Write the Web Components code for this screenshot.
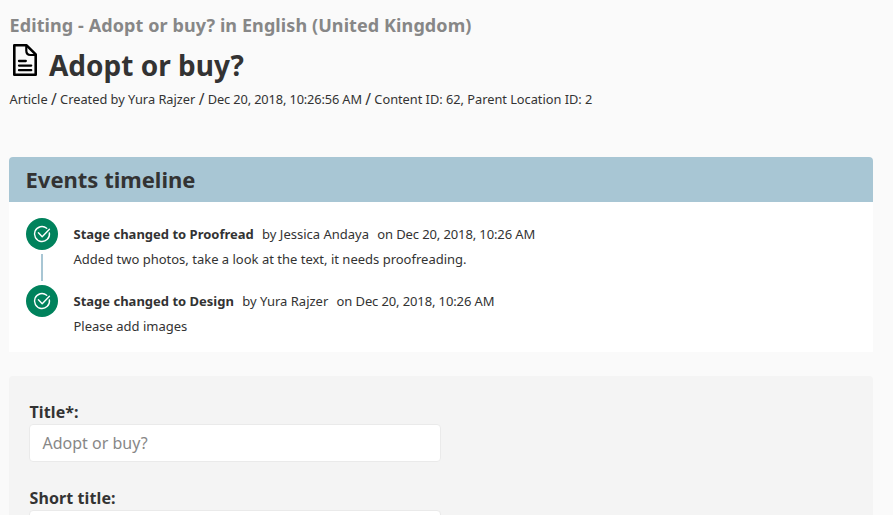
<!DOCTYPE html>
<html lang="en">
<head>
<meta charset="utf-8">
<title>Editing - Adopt or buy?</title>
<style>
html,body{margin:0;height:515px;overflow:hidden}
body{background:#fafafa;color:#333;font-family:"Noto Sans","Open Sans",sans-serif;font-size:16px}
</style>
</head>
<body>
<edit-page></edit-page>
<script>
const define = (name, html) => {
  const template = document.createElement('template');
  template.innerHTML = html;
  customElements.define(name, class extends HTMLElement {
    constructor() {
      super();
      this.attachShadow({ mode: 'open' }).append(template.content.cloneNode(true));
    }
  });
};

define('doc-icon', `
<style>:host{display:block;width:24px;height:32px}svg{display:block}</style>
<svg width="24" height="32" viewBox="0 0 24 32" fill="none" stroke="#000" stroke-width="2.6">
  <path d="M1.3 1.3H13.6L22.7 10.4V30.7H1.3Z" stroke-linejoin="round"/>
  <path d="M13.3 1.5V6.8Q13.3 11 17.5 11H22.7" stroke-width="2.2"/>
  <path d="M6 17H12.8M6 21.6H18.2M6 26.2H18.2" stroke-width="2.3" stroke-linecap="round"/>
</svg>`);

define('check-badge', `
<style>:host{display:block;width:32px;height:32px;border-radius:50%;background:#00825c}svg{display:block}</style>
<svg width="32" height="32" viewBox="0 0 32 32" fill="none" stroke="#fff" stroke-width="1.4" stroke-linecap="round" stroke-linejoin="round">
  <path d="M20.7 10.2A7.5 7.5 0 1 0 23.4 15"/>
  <path d="M12.4 14.8L16.2 18.8L23.4 11.2"/>
</svg>`);

define('content-header', `
<style>
:host{display:block;padding:12px 0 0 9.6px}
.context{font-weight:700;font-size:18px;line-height:27px;letter-spacing:.09px;color:#878787}
.title{display:flex;padding:5px 0 0 3.4px;gap:12px;height:47px;box-sizing:border-box}
h1{margin:0;font-size:28px;line-height:42px;font-weight:700}
.meta{font-size:12.8px;line-height:20px;margin-top:3px;height:21px}
</style>
<div class="context"><slot name="context"></slot></div>
<div class="title"><doc-icon></doc-icon><h1><slot></slot></h1></div>
<div class="meta"><slot name="meta"></slot></div>`);

define('timeline-card', `
<style>
:host{display:flex;flex-direction:column;box-sizing:border-box;height:195px;margin-top:47px;background:#fff;border-radius:4px 4px 0 0;overflow:hidden}
header{height:45px;box-sizing:border-box;padding-left:16.5px;background:#a8c6d4;font-size:22px;line-height:45px;font-weight:700}
.list{display:flex;flex-direction:column;gap:3px;padding:16px 17px}
</style>
<header><slot name="heading"></slot></header>
<div class="list"><slot></slot></div>`);

define('timeline-event', `
<style>
:host{display:flex;gap:15.5px;height:64px;font-size:13px}
.rail{display:flex;flex-direction:column;align-items:center}
.rail i{display:var(--link,block);width:2px;height:27px;margin-top:4px;background:#a8c6d4}
.head{display:flex;gap:8.3px;line-height:20px;padding-top:6px;white-space:pre}
.on{letter-spacing:-.12px}
.note{line-height:20px;margin-top:5px}
</style>
<div class="rail"><check-badge></check-badge><i></i></div>
<div><div class="head"><b><slot name="stage"></slot></b><span><slot name="by"></slot></span><span class="on"><slot name="on"></slot></span></div>
<div class="note"><slot></slot></div></div>`);

define('form-panel', `
<style>:host{display:flex;flex-direction:column;gap:24px;margin-top:24px;padding:24px 20px 0;background:#f4f4f4;border-radius:4px 4px 0 0;overflow:hidden;flex:1;min-height:0}</style>
<slot></slot>`);

define('text-field', `
<style>
:host{display:block}
label{display:block;font-weight:700;line-height:24px;padding-left:.5px;letter-spacing:.1px}
.box{box-sizing:border-box;width:412px;height:38px;border:1px solid #eaeaea;border-radius:4px;background:#fff;padding:0 12.5px;line-height:37px;color:#878787}
</style>
<label><slot name="label"></slot></label><div class="box"><slot></slot></div>`);

define('edit-page', `
<style>
:host{display:flex;flex-direction:column;height:515px;overflow:hidden}
main{display:flex;flex-direction:column;flex:1;min-height:0;padding:0 20px 0 9px}
timeline-card,content-header{flex-shrink:0}
.sep{font-size:15.5px;line-height:0;vertical-align:-1px}.date{letter-spacing:-.13px}.ids{letter-spacing:-.02px}
</style>
<content-header><span slot="context">Editing - Adopt or buy? in English (United Kingdom)</span>Adopt or buy?<span slot="meta">Article <span class="sep">/</span> Created by Yura Rajzer <span class="sep">/</span> <span class="date">Dec 20, 2018, 10:26:56 AM</span> <span class="sep">/</span> <span class="ids">Content ID: 62, Parent Location ID: 2</span></span></content-header>
<main>
<timeline-card><span slot="heading">Events timeline</span>
<timeline-event><span slot="stage">Stage changed to Proofread</span><span slot="by">by Jessica Andaya</span><span slot="on">on Dec 20, 2018, 10:26 AM</span>Added two photos, take a look at the text, it needs proofreading.</timeline-event>
<timeline-event style="--link:none"><span slot="stage">Stage changed to Design</span><span slot="by">by Yura Rajzer</span><span slot="on">on Dec 20, 2018, 10:26 AM</span>Please add images</timeline-event>
</timeline-card>
<form-panel>
<text-field><span slot="label">Title*:</span>Adopt or buy?</text-field>
<text-field><span slot="label">Short title:</span></text-field>
</form-panel>
</main>`);
</script>
</body>
</html>
